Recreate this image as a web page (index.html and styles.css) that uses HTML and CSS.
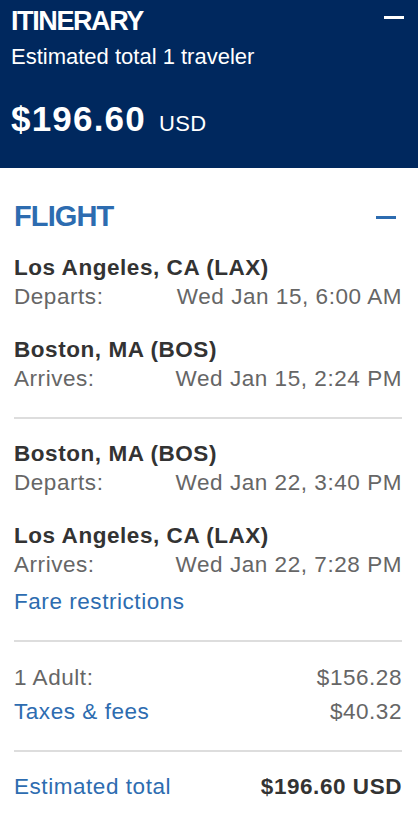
FILE: index.html
```html
<!DOCTYPE html>
<html lang="en">
<head>
<meta charset="utf-8">
<title>Itinerary</title>
<link rel="stylesheet" href="styles.css">
</head>
<body>
<div class="panel">
  <header class="head">
    <div class="head-row">
      <h1 class="head-title">ITINERARY</h1>
      <span class="minus minus-white"></span>
    </div>
    <div class="head-sub">Estimated total 1 traveler</div>
    <div class="head-price"><span class="amount">$196.60</span><span class="cur">USD</span></div>
  </header>

  <section class="content">
    <div class="sec-row">
      <h2 class="sec-title">FLIGHT</h2>
      <span class="minus minus-blue"></span>
    </div>

    <div class="trip">
      <div class="seg">
        <div class="city">Los Angeles, CA (LAX)</div>
        <div class="line"><span>Departs:</span><span>Wed Jan 15, 6:00 AM</span></div>
      </div>
      <div class="seg">
        <div class="city">Boston, MA (BOS)</div>
        <div class="line"><span>Arrives:</span><span>Wed Jan 15, 2:24 PM</span></div>
      </div>
    </div>

    <div class="divider"></div>

    <div class="trip trip-2">
      <div class="seg">
        <div class="city">Boston, MA (BOS)</div>
        <div class="line"><span>Departs:</span><span>Wed Jan 22, 3:40 PM</span></div>
      </div>
      <div class="seg">
        <div class="city">Los Angeles, CA (LAX)</div>
        <div class="line"><span>Arrives:</span><span>Wed Jan 22, 7:28 PM</span></div>
      </div>
      <a class="link fare" href="#">Fare restrictions</a>
    </div>

    <div class="divider"></div>

    <div class="prices">
      <div class="line"><span>1 Adult:</span><span>$156.28</span></div>
      <div class="line"><a class="link" href="#">Taxes &amp; fees</a><span>$40.32</span></div>
    </div>

    <div class="divider"></div>

    <div class="total">
      <a class="link" href="#">Estimated total</a>
      <span class="total-val">$196.60 USD</span>
    </div>
  </section>
</div>
</body>
</html>
```

FILE: styles.css
```css
* { box-sizing: border-box; }
html, body { margin: 0; padding: 0; background: #fff; }
body {
  font-family: "Liberation Sans", Arial, Helvetica, sans-serif;
  width: 418px;
  height: 816px;
  overflow: hidden;
}
.panel { width: 418px; }

.head {
  background: #00285e;
  color: #fff;
  padding: 7px 11px 29px 11px;
  height: 168px;
}
.head-row {
  display: flex;
  justify-content: space-between;
  align-items: flex-start;
  height: 29px;
}
.head-title {
  margin: 0;
  font-size: 27px;
  line-height: 29px;
  font-weight: bold;
  letter-spacing: -1.4px;
}
.minus { display: block; width: 20px; height: 3px; }
.minus-white { background: #fff; margin-top: 9px; margin-right: 3px; }
.minus-blue { background: #2d6cb0; margin-top: 16px; margin-right: 6px; }

.head-sub {
  margin-top: 7px;
  font-size: 22px;
  line-height: 28px;
  height: 28px;
}
.head-price {
  margin-top: 28px;
  height: 40px;
  display: flex;
  align-items: baseline;
  gap: 13px;
  white-space: nowrap;
}
.amount {
  font-size: 35px;
  line-height: 40px;
  font-weight: bold;
  letter-spacing: 1.2px;
}
.cur {
  font-size: 22px;
  line-height: 22px;
  letter-spacing: 0.4px;
}

.content {
  padding: 32px 16px 0 14px;
  font-size: 22.5px;
  letter-spacing: 0.55px;
  line-height: 29px;
  color: #666;
}
.sec-row {
  display: flex;
  justify-content: space-between;
  align-items: flex-start;
  height: 32px;
  margin-bottom: 21px;
}
.sec-title {
  margin: 0;
  font-size: 29px;
  line-height: 32px;
  font-weight: bold;
  color: #2d6cb0;
  letter-spacing: -0.9px;
}
.seg + .seg { margin-top: 24px; }
.city { color: #333; font-weight: bold; }
.line {
  display: flex;
  justify-content: space-between;
  white-space: nowrap;
}
.divider {
  height: 2px;
  background: #dddddd;
  margin-top: 24px;
}
.trip-2 { padding-top: 20px; }
.link { color: #2d6cb0; text-decoration: none; }
.fare { display: block; margin-top: 8px; }
.prices { padding-top: 21px; }
.prices .line + .line { margin-top: 5px; }
.total {
  padding-top: 20px;
  display: flex;
  justify-content: space-between;
  white-space: nowrap;
}
.total-val { color: #333; font-weight: bold; }
```
